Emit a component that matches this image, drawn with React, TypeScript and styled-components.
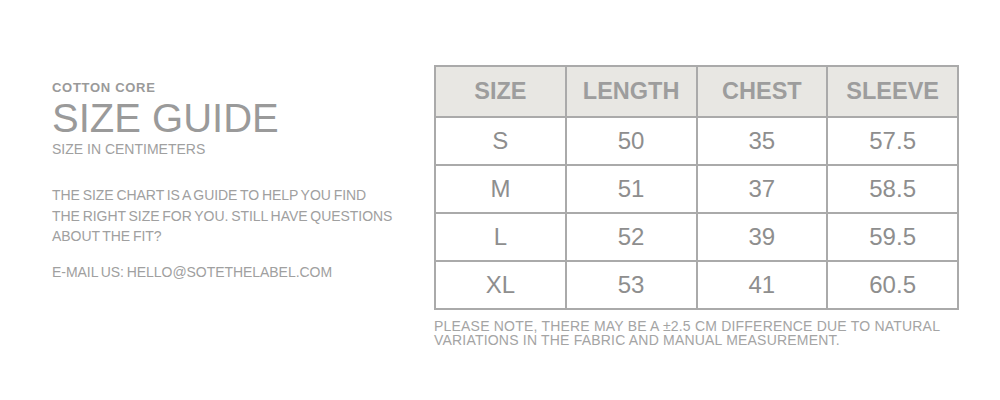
import React from "react";
import styled, { createGlobalStyle } from "styled-components";

const Global = createGlobalStyle`
  html, body { margin: 0; padding: 0; background: #fff; }
  body { font-family: "Liberation Sans", Arial, sans-serif; }
`;

const Page = styled.div`
  width: 1000px;
  height: 400px;
  display: flex;
  align-items: flex-start;
  box-sizing: border-box;
  padding: 65px 0 0 52px;
`;

const Intro = styled.div`
  width: 382px;
  padding-top: 15px;
  color: #999;
`;

const Brand = styled.div`
  font-size: 13px;
  font-weight: 700;
  line-height: 16px;
  letter-spacing: 0.7px;
  color: #9a9a9a;
`;

const Title = styled.h1`
  margin: 0;
  font-size: 40px;
  font-weight: 400;
  line-height: 45px;
  color: #9a9a9a;
`;

const Sub = styled.div`
  font-size: 14px;
  line-height: 16px;
  color: #a0a0a0;
`;

const Body = styled.p<{ $top: number }>`
  margin: ${(p) => p.$top}px 0 0;
  max-width: 346px;
  font-size: 14px;
  line-height: 20.5px;
  letter-spacing: -0.05px;
  word-spacing: -1px;
  color: #a0a0a0;
`;

const TableBlock = styled.div`
  display: flex;
  flex-direction: column;
`;

const Table = styled.table`
  border-collapse: collapse;
  width: 525px;
  table-layout: fixed;
  border: 2px solid #aaa;
`;

const Th = styled.th`
  height: 49px;
  background: #e8e7e3;
  border: 2px solid #aaa;
  font-size: 23.5px;
  font-weight: 700;
  color: #9d9d9d;
  text-align: center;
  padding: 0;
`;

const Td = styled.td`
  height: 46px;
  border: 2px solid #aaa;
  font-size: 24px;
  font-weight: 400;
  color: #8e8e8e;
  text-align: center;
  padding: 0;
`;

const Note = styled.p`
  margin: 9px 0 0;
  font-size: 14px;
  line-height: 14px;
  letter-spacing: 0.2px;
  color: #a4a4a4;
  width: 525px;
`;

const rows = [
  ["S", "50", "35", "57.5"],
  ["M", "51", "37", "58.5"],
  ["L", "52", "39", "59.5"],
  ["XL", "53", "41", "60.5"],
];

export default function App() {
  return (
    <>
      <Global />
      <Page>
        <Intro>
          <Brand>COTTON CORE</Brand>
          <Title>SIZE GUIDE</Title>
          <Sub>SIZE IN CENTIMETERS</Sub>
          <Body $top={28}>
            THE SIZE CHART IS A GUIDE TO HELP YOU FIND
            <br />
            THE RIGHT SIZE FOR YOU. STILL HAVE QUESTIONS ABOUT THE FIT?
          </Body>
          <Body $top={15.5}>E-MAIL US: HELLO@SOTETHELABEL.COM</Body>
        </Intro>
        <TableBlock>
          <Table>
            <thead>
              <tr>
                <Th>SIZE</Th>
                <Th>LENGTH</Th>
                <Th>CHEST</Th>
                <Th>SLEEVE</Th>
              </tr>
            </thead>
            <tbody>
              {rows.map((r) => (
                <tr key={r[0]}>
                  {r.map((c, i) => (
                    <Td key={i}>{c}</Td>
                  ))}
                </tr>
              ))}
            </tbody>
          </Table>
          <Note>
            PLEASE NOTE, THERE MAY BE A ±2.5 CM DIFFERENCE DUE TO NATURAL VARIATIONS IN THE FABRIC AND
            MANUAL MEASUREMENT.
          </Note>
        </TableBlock>
      </Page>
    </>
  );
}
